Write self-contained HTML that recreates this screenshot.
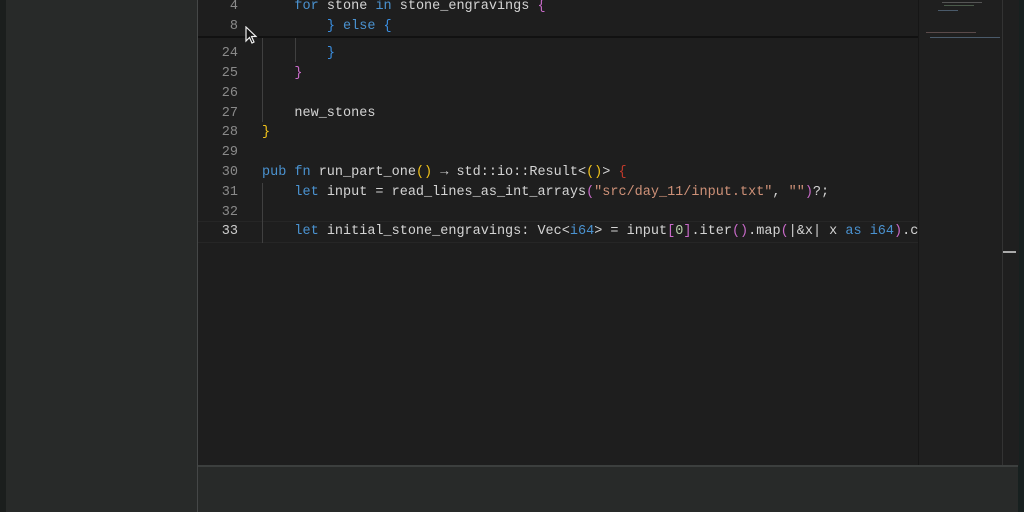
<!DOCTYPE html>
<html><head><style>
body{margin:0;width:1024px;height:512px;overflow:hidden;background:#1e1e1e;position:relative;font-family:"Liberation Mono",monospace}
.a{position:absolute}
.code{font-size:13.5px;white-space:pre;color:#d4d4d4;line-height:20px}
.k{color:#4a92d0}.y{color:#f2c31a}.m{color:#c86ac8}.b{color:#3a8ee0}.s{color:#ce9178}.n{color:#b5cea8}
.ln{color:#8a8a8a;text-align:right;width:40px;left:198px}
</style></head><body>
<div class="a" style="left:0;top:0;width:6px;height:512px;background:#1b1e1d"></div>
<div class="a" style="left:6px;top:0;width:191px;height:512px;background:#282a29"></div>
<div class="a" style="left:197px;top:0;width:1px;height:512px;background:#454747"></div>
<div class="a" style="left:1018px;top:0;width:6px;height:512px;background:#17201f"></div>
<div class="a" style="left:918px;top:0;width:100px;height:466px;background:#1f1f1f;border-left:1px solid #161616"></div>
<div class="a" style="left:1002px;top:0;width:1px;height:466px;background:#333"></div>
<div class="a" style="left:1003px;top:251px;width:13px;height:2px;background:#aaa"></div>
<div class="a" style="left:198px;top:465px;width:820px;height:2px;background:#3c3f3e"></div>
<div class="a" style="left:198px;top:467px;width:820px;height:45px;background:#282a29"></div>
<div class="a" style="left:198px;top:221px;width:720px;height:20px;border-top:1px solid #262626;border-bottom:1px solid #262626"></div>
<div class="a" style="left:262px;top:38px;width:1px;height:84px;background:#404040"></div>
<div class="a" style="left:295px;top:38px;width:1px;height:24px;background:#404040"></div>
<div class="a" style="left:262px;top:183px;width:1px;height:60px;background:#404040"></div>
<div style="position:absolute;left:0;top:0;width:918px;height:466px;overflow:hidden">
<div class="a code ln" style="top:44px">24</div>
<div class="a code ln" style="top:64px">25</div>
<div class="a code ln" style="top:84px">26</div>
<div class="a code ln" style="top:104px">27</div>
<div class="a code ln" style="top:123px">28</div>
<div class="a code ln" style="top:143px">29</div>
<div class="a code ln" style="top:163px">30</div>
<div class="a code ln" style="top:183px">31</div>
<div class="a code ln" style="top:203px">32</div>
<div class="a code ln" style="top:222px;color:#ccc">33</div>
<div class="a code" style="left:262px;top:44px">        <span class="b">}</span></div>
<div class="a code" style="left:262px;top:64px">    <span class="m">}</span></div>
<div class="a code" style="left:262px;top:104px">    new_stones</div>
<div class="a code" style="left:262px;top:123px"><span class="y">}</span></div>
<div class="a code" style="left:262px;top:163px"><span class="k">pub fn</span> run_part_one<span class="y">()</span> → std::io::Result&lt;<span class="y">()</span>&gt; <span style="color:#c0392b">{</span></div>
<div class="a code" style="left:262px;top:183px">    <span class="k">let</span> input = read_lines_as_int_arrays<span class="m">(</span><span class="s">"src/day_11/input.txt"</span>, <span class="s">""</span><span class="m">)</span>?;</div>
<div class="a code" style="left:262px;top:222px">    <span class="k">let</span> initial_stone_engravings: Vec&lt;<span class="k">i64</span>&gt; = input<span class="m">[</span><span class="n">0</span><span class="m">]</span>.iter<span class="m">()</span>.map<span class="m">(</span>|&amp;x| x <span class="k">as i64</span><span class="m">)</span>.collect();</div>
<div class="a" style="left:198px;top:0;width:720px;height:36px;background:#1e1e1e;border-bottom:2px solid #111"></div>
<div class="a code ln" style="top:-3px">4</div>
<div class="a code ln" style="top:17px">8</div>
<div class="a code" style="left:262px;top:-3px">    <span class="k">for</span> stone <span class="k">in</span> stone_engravings <span class="m">{</span></div>
<div class="a code" style="left:262px;top:17px">        <span class="b">}</span> <span class="k">else</span> <span class="b">{</span></div>
</div>
<svg class="a" style="left:245px;top:26px" width="14" height="20" viewBox="0 0 14 20"><path d="M1 1 L1 15 L4.5 11.5 L7 17 L9 16 L6.5 10.5 L11 10.5 Z" fill="#111" stroke="#eee" stroke-width="1.2"/></svg>
<div class="a" style="left:942px;top:2px;width:40px;height:1px;background:#555"></div>
<div class="a" style="left:944px;top:5px;width:30px;height:1px;background:#4a5a4a"></div>
<div class="a" style="left:938px;top:10px;width:20px;height:1px;background:#4a5a6a"></div>
<div class="a" style="left:926px;top:32px;width:50px;height:1px;background:#5a4a4a"></div>
<div class="a" style="left:930px;top:37px;width:70px;height:1px;background:#4a5a6a"></div>
</body></html>
